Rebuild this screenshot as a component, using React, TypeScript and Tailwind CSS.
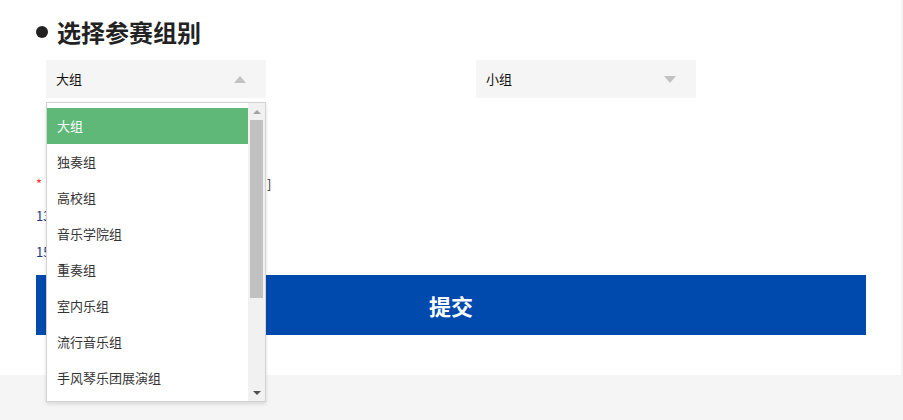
import React from "react";

const groups = [
  "大组",
  "独奏组",
  "高校组",
  "音乐学院组",
  "重奏组",
  "室内乐组",
  "流行音乐组",
  "手风琴乐团展演组",
];

const font = { fontFamily: '"Noto Sans CJK SC", "Noto Sans", sans-serif' };

function Caret({ up }: { up?: boolean }) {
  return (
    <svg width="12" height="7" viewBox="0 0 12 7" className="block">
      {up ? <path d="M0 7 L6 0 L12 7 Z" fill="#c2c2c2" /> : <path d="M0 0 L6 7 L12 0 Z" fill="#c2c2c2" />}
    </svg>
  );
}

function Select({ value, open }: { value: string; open?: boolean }) {
  return (
    <div className="w-[220px] h-[38px] bg-[#f5f5f5] rounded-[2px] flex items-center justify-between pl-[10px] pr-[20px]">
      <span className="text-[13px] text-[#111]">{value}</span>
      <Caret up={open} />
    </div>
  );
}

export default function App() {
  return (
    <div className="min-h-[420px] bg-[#f5f5f5]" style={font}>
      <div className="relative w-[901px] h-[375px] bg-white pl-[36px] pt-[18px]">
        {/* title */}
        <div className="flex items-center gap-[9px] h-[28px]">
          <span className="w-[12px] h-[12px] rounded-full bg-[#222]" />
          <h2 className="text-[24px] font-bold text-[#222] leading-none">选择参赛组别</h2>
        </div>

        {/* selects */}
        <div className="flex gap-[210px] mt-[14px] ml-[10px]">
          <Select value="大组" open />
          <Select value="小组" />
        </div>

        {/* notes under the dropdown */}
        <div className="mt-[77px] text-[13px] leading-[18px]">
          <div className="flex items-center">
            <span className="text-[#ff3333] mr-[3px]">*</span>
            <span className="text-[#e08a00]">：</span>
            <span className="ml-[209px] text-[#333]">]</span>
          </div>
          <div className="mt-[14px] text-[#1d3a7a]">13</div>
          <div className="mt-[18px] text-[#1d3a7a]">15</div>
        </div>

        {/* submit */}
        <button className="mt-[14px] w-[830px] h-[60px] bg-[#004aad] text-white text-[22px] font-bold">
          提交
        </button>

        {/* open dropdown */}
        <div className="absolute left-[46px] top-[102px] w-[220px] h-[300px] bg-white border border-[#d2d2d2] shadow-[0_2px_4px_rgba(0,0,0,0.12)] flex">
          <div className="flex-1 overflow-hidden pt-[5px]">
            {groups.map((g, i) => (
              <div
                key={g}
                className={
                  "h-[36px] flex items-center pl-[10px] text-[13px] " +
                  (i === 0 ? "bg-[#5fb878] text-white" : "text-[#333]")
                }
              >
                {g}
              </div>
            ))}
          </div>
          {/* scrollbar */}
          <div className="w-[17px] bg-[#f1f1f1] flex flex-col items-center">
            <div className="h-[17px] flex items-center justify-center">
              <svg width="8" height="4" viewBox="0 0 8 4"><path d="M0 4 L4 0 L8 4 Z" fill="#a3a3a3" /></svg>
            </div>
            <div className="w-[13px] h-[178px] bg-[#c1c1c1]" />
            <div className="flex-1" />
            <div className="h-[17px] flex items-center justify-center">
              <svg width="8" height="4" viewBox="0 0 8 4"><path d="M0 0 L4 4 L8 0 Z" fill="#505050" /></svg>
            </div>
          </div>
        </div>
      </div>
    </div>
  );
}
